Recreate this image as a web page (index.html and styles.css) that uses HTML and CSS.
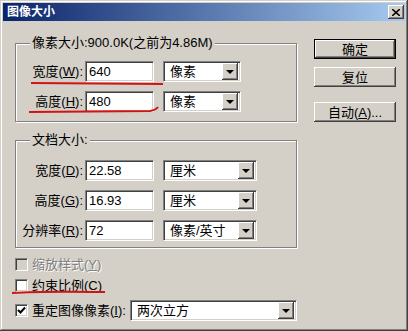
FILE: index.html
```html
<!DOCTYPE html>
<html lang="zh-CN">
<head>
    <meta charset="UTF-8">
    <meta name="viewport" content="width=device-width, initial-scale=1.0">
    <title>图像大小</title>
    <link rel="stylesheet" href="styles.css">
</head>
<body>

    <div class="window">
        <div class="titlebar">
            <span class="title">图像大小</span>
            <span class="close-btn">
                <svg width="8" height="7" viewBox="0 0 8 7"><path d="M0 0 L8 7 M8 0 L0 7" stroke="#000" stroke-width="1.6"/></svg>
            </span>
        </div>

        <div class="dialog-body">
            <div class="left-col">
                <fieldset class="group group-pixels">
                    <legend>像素大小:900.0K(之前为4.86M)</legend>
                    <div class="row">
                        <span class="label">宽度(<u>W</u>):</span>
                        <span class="field">640</span>
                        <span class="combo combo-short"><span class="combo-text">像素</span><span class="arrow"></span></span>
                    </div>
                    <div class="row">
                        <span class="label">高度(<u>H</u>):</span>
                        <span class="field">480</span>
                        <span class="combo combo-short"><span class="combo-text">像素</span><span class="arrow"></span></span>
                    </div>
                </fieldset>

                <fieldset class="group group-doc">
                    <legend>文档大小:</legend>
                    <div class="row">
                        <span class="label">宽度(<u>D</u>):</span>
                        <span class="field">22.58</span>
                        <span class="combo combo-long"><span class="combo-text">厘米</span><span class="arrow"></span></span>
                    </div>
                    <div class="row">
                        <span class="label">高度(<u>G</u>):</span>
                        <span class="field">16.93</span>
                        <span class="combo combo-long"><span class="combo-text">厘米</span><span class="arrow"></span></span>
                    </div>
                    <div class="row">
                        <span class="label">分辨率(<u>R</u>):</span>
                        <span class="field">72</span>
                        <span class="combo combo-long"><span class="combo-text">像素/英寸</span><span class="arrow"></span></span>
                    </div>
                </fieldset>

                <div class="checks">
                    <div class="check-row disabled">
                        <span class="checkbox"></span>
                        <span class="check-label">缩放样式(<u>Y</u>)</span>
                    </div>
                    <div class="check-row">
                        <span class="checkbox"></span>
                        <span class="check-label">约束比例(<u>C</u>)</span>
                    </div>
                    <div class="check-row check-row-wide">
                        <span class="checkbox">
                            <svg width="9" height="9" viewBox="0 0 9 9"><path d="M1 4 L3.5 6.5 L8 1.5" fill="none" stroke="#000" stroke-width="2"/></svg>
                        </span>
                        <span class="check-label resample-label">重定图像像素(<u>I</u>):</span>
                        <span class="combo combo-resample"><span class="combo-text">两次立方</span><span class="arrow"></span></span>
                    </div>
                </div>
            </div>

            <div class="right-col">
                <span class="btn btn-default">确定</span>
                <span class="btn">复位</span>
                <span class="btn btn-auto">自动(<u>A</u>)...</span>
            </div>
        </div>

        <svg class="marks" width="408" height="331" viewBox="0 0 408 331">
            <path d="M31 83 L163 84" />
            <path d="M29 112 L150 111 Q156 110 158 107" />
            <path d="M12 293 Q40 291 105 292" />
        </svg>
    </div>

</body>
</html>
```

FILE: styles.css
```css
body {
    margin: 0;
    background-color: #3a4a66;
    font-family: "Liberation Sans", "Noto Sans CJK SC", sans-serif;
    font-size: 13px;
    color: #000;
}

.window {
    position: relative;
    width: 408px;
    height: 331px;
    box-sizing: border-box;
    padding: 3px;
    background-color: #d4d0c8;
    box-shadow: inset -1px -1px #404040, inset 1px 1px #d4d0c8, inset -2px -2px #808080, inset 2px 2px #ffffff;
}

.titlebar {
    height: 18px;
    display: flex;
    align-items: center;
    justify-content: space-between;
    padding: 0 1px 0 4px;
    background: linear-gradient(to right, #0a246a, #a6caf0);
}

.title {
    color: #ffffff;
    font-size: 12px;
    font-weight: bold;
    line-height: 14px;
}

.close-btn {
    width: 16px;
    height: 14px;
    box-sizing: border-box;
    display: flex;
    align-items: center;
    justify-content: center;
    background-color: #d4d0c8;
    box-shadow: inset -1px -1px #404040, inset 1px 1px #ffffff, inset -2px -2px #808080;
}

.dialog-body {
    display: flex;
    padding-left: 12px;
    gap: 17px;
}

.left-col {
    width: 282px;
}

.group {
    margin: 0;
    padding: 0;
    border: 1px solid #808080;
    box-shadow: inset 1px 1px #ffffff, 1px 1px #ffffff;
}

.group legend {
    margin-left: 14px;
    padding: 0 2px;
    line-height: 14px;
    background-color: #d4d0c8;
}

.group-pixels {
    margin-top: 15px;
    padding-top: 11px;
    padding-bottom: 9px;
}

.group-doc {
    margin-top: 11px;
    padding-top: 13px;
    padding-bottom: 6px;
}

.row {
    display: flex;
    align-items: center;
    height: 21px;
}

.row + .row {
    margin-top: 9px;
}

.label {
    width: 67px;
    margin-right: 2px;
    text-align: right;
    line-height: 15px;
}

.field {
    width: 69px;
    height: 21px;
    box-sizing: border-box;
    padding: 3px 0 0 3px;
    line-height: 14px;
    background-color: #ffffff;
    border: 1px solid;
    border-color: #808080 #ffffff #ffffff #808080;
    box-shadow: inset 1px 1px #404040, inset -1px -1px #d4d0c8;
}

.combo {
    display: flex;
    align-items: center;
    justify-content: space-between;
    height: 21px;
    box-sizing: border-box;
    margin-left: 9px;
    padding: 2px 2px 2px 6px;
    background-color: #ffffff;
    border: 1px solid;
    border-color: #808080 #ffffff #ffffff #808080;
    box-shadow: inset 1px 1px #404040, inset -1px -1px #d4d0c8;
}

.combo-short {
    width: 78px;
}

.combo-long {
    width: 94px;
}

.combo-resample {
    width: 167px;
    margin-left: 0;
}

.combo-text {
    line-height: 15px;
}

.arrow {
    width: 16px;
    height: 17px;
    box-sizing: border-box;
    display: flex;
    align-items: center;
    justify-content: center;
    background-color: #d4d0c8;
    box-shadow: inset -1px -1px #404040, inset 1px 1px #ffffff, inset -2px -2px #808080;
}

.arrow::after {
    content: "";
    border-left: 4px solid transparent;
    border-right: 4px solid transparent;
    border-top: 4px solid #000000;
    margin-top: 1px;
}

.checks {
    margin-top: 10px;
    display: flex;
    flex-direction: column;
    gap: 8px;
}

.check-row {
    display: flex;
    align-items: center;
    height: 13px;
}

.check-row-wide {
    height: 21px;
}

.checkbox {
    width: 13px;
    height: 13px;
    box-sizing: border-box;
    margin-right: 4px;
    display: flex;
    align-items: center;
    justify-content: center;
    background-color: #ffffff;
    border: 1px solid;
    border-color: #808080 #ffffff #ffffff #808080;
    box-shadow: inset 1px 1px #404040, inset -1px -1px #d4d0c8;
}

.check-label {
    line-height: 15px;
}

.resample-label {
    width: 98px;
}

.disabled .checkbox {
    background-color: #d4d0c8;
}

.disabled .check-label {
    color: #808080;
    text-shadow: 1px 1px #ffffff;
}

.right-col {
    display: flex;
    flex-direction: column;
    margin-top: 18px;
}

.btn {
    width: 82px;
    height: 20px;
    box-sizing: border-box;
    display: flex;
    align-items: center;
    justify-content: center;
    line-height: 15px;
    background-color: #d4d0c8;
    box-shadow: inset -1px -1px #404040, inset 1px 1px #ffffff, inset -2px -2px #808080;
}

.btn + .btn {
    margin-top: 8px;
}

.btn-default {
    border: 1px solid #000000;
}

.btn-auto {
    margin-top: 15px !important;
}

.marks {
    position: absolute;
    left: 0;
    top: 0;
    pointer-events: none;
}

.marks path {
    fill: none;
    stroke: #d01414;
    stroke-width: 2;
}
```
